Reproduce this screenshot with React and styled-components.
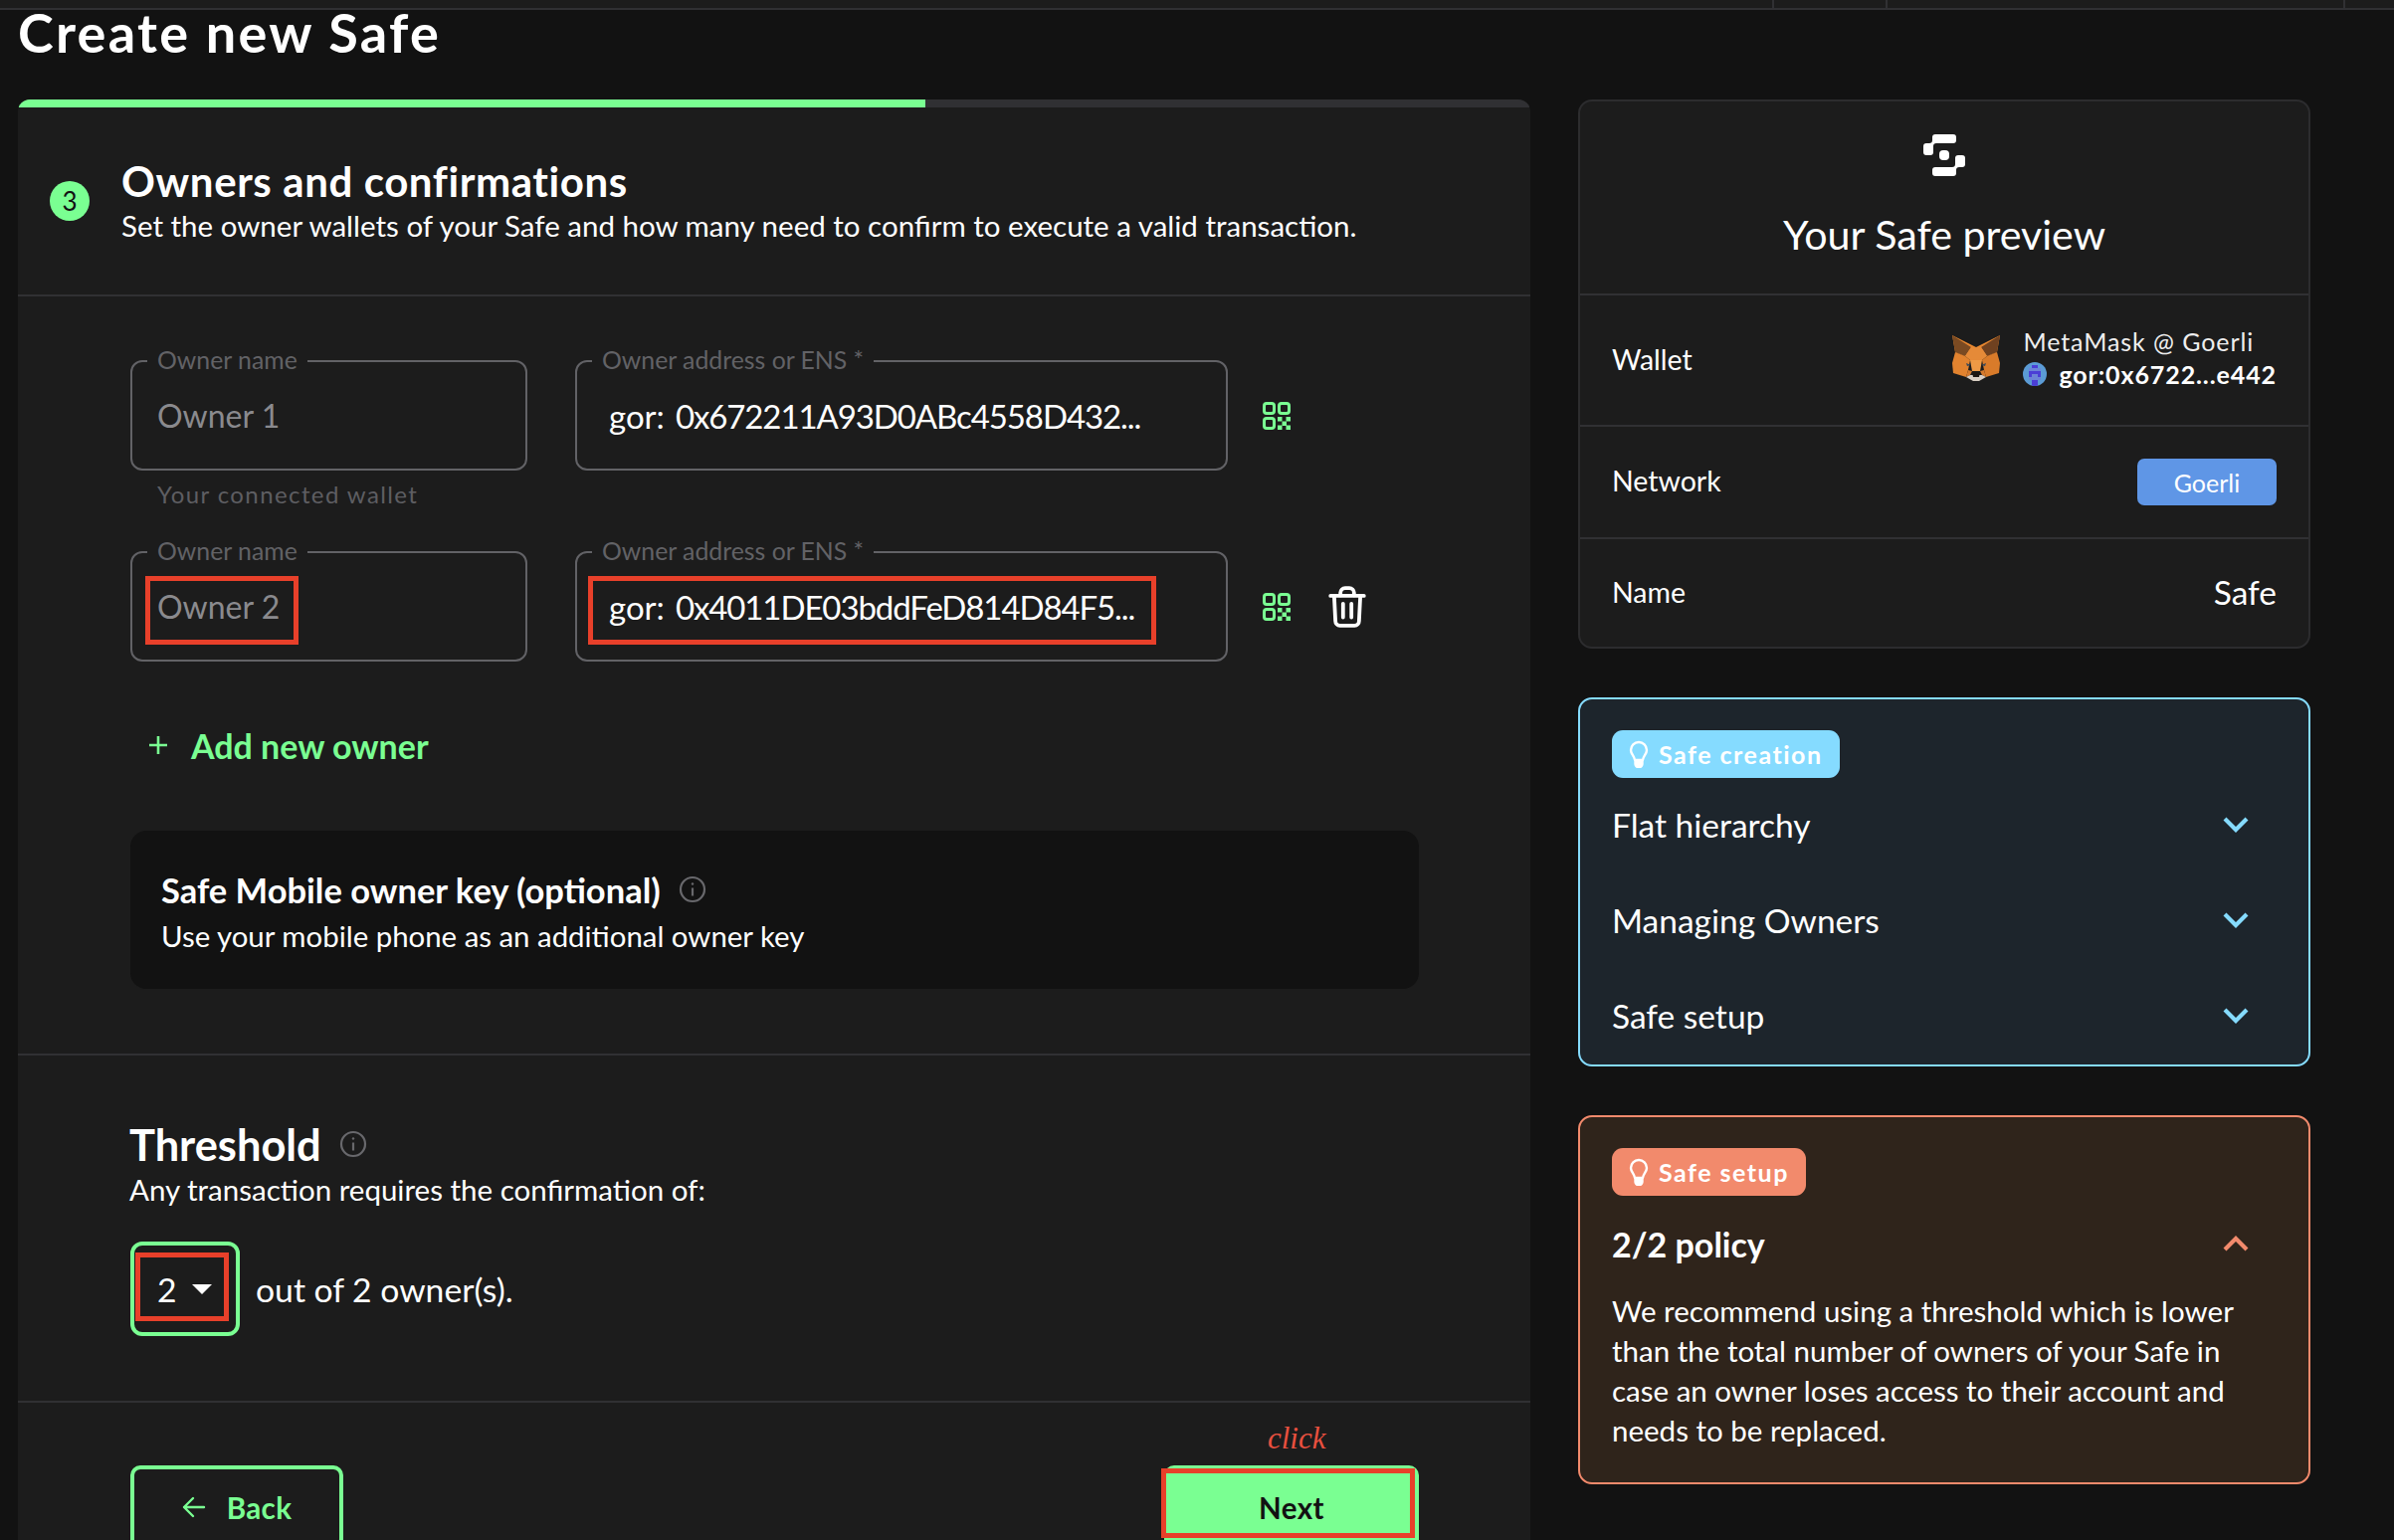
import React from 'react';
import styled, { createGlobalStyle } from 'styled-components';

const GREEN = '#7aff92';
const RED = '#e8402a';
const LINE = '#303033';

const GlobalStyle = createGlobalStyle`
  html, body {
    margin: 0;
    height: 1548px;
    overflow: hidden;
    background: #121212;
    color: #fff;
    font-family: Lato, "Noto Sans", sans-serif;
  }
  * { box-sizing: border-box; }
`;

const TopBar = styled.div`
  display: grid;
  grid-template-columns: 1783px 114px 460px 1fr;
  height: 10px;
  background: #1c1c1c;
  border-bottom: 2px solid ${LINE};
`;

const TopCell = styled.div`
  border-right: 2px solid ${LINE};
  &:last-child { border-right: 0; }
`;

const Page = styled.div`
  padding: 0 18px;
`;

const PageTitle = styled.h1`
  margin: 0 0 42px;
  height: 48px;
  font-size: 54px;
  line-height: 46px;
  font-weight: 700;
  letter-spacing: 2.3px;
`;

const Columns = styled.div`
  display: grid;
  grid-template-columns: 1520px 736px;
  gap: 48px;
  align-items: start;
`;

const MainCard = styled.section`
  background: #1c1c1c;
  border-radius: 12px 12px 0 0;
  overflow: hidden;
`;

const Progress = styled.div`
  height: 8px;
  background: ${LINE};
`;

const ProgressFill = styled.div`
  height: 100%;
  background: ${GREEN};
`;

const StepHeader = styled.header`
  display: flex;
  align-items: center;
  gap: 32px;
  height: 188px;
  padding-left: 32px;
`;

const StepCircle = styled.div`
  flex: none;
  display: flex;
  align-items: center;
  justify-content: center;
  width: 40px;
  height: 40px;
  border-radius: 50%;
  background: ${GREEN};
  color: #121212;
  font-size: 26px;
`;

const StepTitle = styled.h2`
  margin: -2px 0 2px;
  font-size: 42px;
  line-height: 50px;
  font-weight: 700;
  letter-spacing: 0.6px;
`;

const StepText = styled.p`
  margin: 0;
  font-size: 29.5px;
  line-height: 36px;
`;

const Section = styled.div`
  border-top: 2px solid ${LINE};
  padding: ${p => p.$top}px 112px 65px 113px;
`;

const FieldRow = styled.div`
  display: flex;
  align-items: center;
`;

const Field = styled.div`
  position: relative;
  flex: none;
  display: flex;
  align-items: center;
  width: ${p => p.$width}px;
  height: 111px;
  margin-right: ${p => p.$gap}px;
  padding-left: ${p => p.$inset}px;
  border: 2px solid #626266;
  border-radius: 12px;
  font-size: ${p => (p.$muted ? 32 : 33)}px;
  color: ${p => (p.$muted ? '#8a8a8e' : '#fff')};
`;

const FieldLabel = styled.label`
  position: absolute;
  top: -15px;
  left: 15px;
  padding: 0 10px;
  background: #1c1c1c;
  font-size: 24.8px;
  line-height: 26px;
  color: #626266;
  white-space: nowrap;
`;

const AddressHex = styled.span`
  margin-left: 11px;
  letter-spacing: -1.1px;
`;

const Helper = styled.div`
  height: 81px;
  padding: 11px 0 0 27px;
  font-size: 24px;
  line-height: 26px;
  letter-spacing: 1.4px;
  color: #5e5e62;
`;

const QrButton = styled.svg`
  flex: none;
  width: 28px;
  height: 28px;
  color: ${GREEN};
`;

const TrashButton = styled.svg`
  flex: none;
  width: 38px;
  height: 42px;
  margin-left: 38px;
  color: #fff;
`;

const Mark = styled.div`
  position: absolute;
  left: ${p => p.$left}px;
  top: ${p => p.$top}px;
  width: ${p => p.$w}px;
  height: ${p => p.$h}px;
  border: 5px solid ${RED};
  pointer-events: none;
`;

const AddOwner = styled.div`
  display: flex;
  align-items: center;
  gap: 23px;
  height: 40px;
  margin: 64px 0 66px 18px;
  color: ${GREEN};
  font-size: 34px;
  font-weight: 700;
`;

const MobileBox = styled.div`
  width: 1295px;
  height: 159px;
  padding: 36px 31px 0;
  background: #121212;
  border-radius: 16px;
`;

const MobileTitle = styled.div`
  display: flex;
  align-items: center;
  gap: 18px;
  height: 46px;
  font-size: 34.5px;
  font-weight: 700;
`;

const MobileText = styled.div`
  margin-top: 4px;
  font-size: 29.4px;
  line-height: 40px;
`;

const InfoIcon = styled.svg`
  flex: none;
  width: 28px;
  height: 28px;
  color: #68686c;
`;

const ThresholdTitle = styled.div`
  display: flex;
  align-items: center;
  gap: 18px;
  height: 50px;
  margin-left: -1px;
  font-size: 43.4px;
  font-weight: 700;
`;

const ThresholdText = styled.div`
  margin: 3px 0 34px -1px;
  font-size: 29.5px;
  line-height: 36px;
`;

const ThresholdRow = styled.div`
  display: flex;
  align-items: center;
  gap: 16px;
  font-size: 33.7px;
`;

const Select = styled.div`
  position: relative;
  display: flex;
  align-items: center;
  gap: 15px;
  width: 110px;
  height: 95px;
  padding-left: 23px;
  border: 4px solid ${GREEN};
  border-radius: 12px;
`;

const Caret = styled.span`
  width: 0;
  height: 0;
  border-left: 10px solid transparent;
  border-right: 10px solid transparent;
  border-top: 10px solid #fff;
`;

const Footer = styled.div`
  display: flex;
  justify-content: space-between;
  height: 141px;
  padding: 63px 112px 0 113px;
  border-top: 2px solid ${LINE};
`;

const Button = styled.div`
  position: relative;
  display: flex;
  align-items: center;
  justify-content: center;
  gap: 21px;
  width: ${p => p.$width}px;
  height: 84px;
  border: 4px solid ${GREEN};
  border-radius: 10px;
  background: ${p => (p.$filled ? GREEN : 'transparent')};
  color: ${p => (p.$filled ? '#121212' : GREEN)};
  font-size: 29.5px;
  font-weight: 700;
  letter-spacing: 0.4px;
`;

const ClickNote = styled.span`
  position: absolute;
  left: 100px;
  top: -51px;
  font-family: "Liberation Serif", serif;
  font-style: italic;
  font-size: 31px;
  font-weight: 400;
  line-height: 40px;
  letter-spacing: 0;
  color: #e8503f;
`;

const Side = styled.aside`
  display: flex;
  flex-direction: column;
  gap: 49px;
`;

const PreviewCard = styled.div`
  border: 2px solid #2c2c2e;
  border-radius: 14px;
  background: #1c1c1c;
  overflow: hidden;
`;

const PreviewHead = styled.div`
  display: flex;
  flex-direction: column;
  align-items: center;
  height: 193px;
  padding-top: 33px;
  font-size: 41.2px;
  line-height: 50px;
`;

const SafeLogo = styled.svg`
  width: 42px;
  height: 42px;
  margin-bottom: 33px;
`;

const PreviewRow = styled.div`
  display: flex;
  align-items: center;
  justify-content: space-between;
  height: ${p => p.$h}px;
  padding: 0 32px;
  border-top: 2px solid ${LINE};
`;

const RowLabel = styled.span`
  margin-bottom: 3px;
  font-size: 28.5px;
`;

const RowValue = styled.span`
  margin-bottom: 3px;
  font-size: 33.5px;
`;

const Wallet = styled.div`
  display: flex;
  align-items: center;
  gap: 23px;
  margin-bottom: 4px;
`;

const Fox = styled.svg`
  width: 48px;
  height: 46px;
`;

const WalletLines = styled.div`
  display: flex;
  flex-direction: column;
  gap: 3px;
  margin-bottom: 2px;
`;

const WalletName = styled.div`
  font-size: 25px;
  line-height: 30px;
  letter-spacing: 0.93px;
  color: #eee;
`;

const WalletAddress = styled.div`
  display: flex;
  align-items: center;
  gap: 12px;
  font-size: 25px;
  line-height: 30px;
  font-weight: 700;
  letter-spacing: 0.9px;
`;

const Identicon = styled.svg`
  width: 24px;
  height: 24px;
  border-radius: 50%;
`;

const NetworkChip = styled.div`
  display: flex;
  align-items: center;
  justify-content: center;
  width: 140px;
  height: 47px;
  border-radius: 7px;
  background: #5f96e6;
  font-size: 25px;
`;

const TipCard = styled.div`
  height: ${p => p.$h}px;
  padding: 31px 32px 0;
  border: 2px solid ${p => p.$accent};
  border-radius: 14px;
  background: ${p => p.$bg};
`;

const TipBadge = styled.div`
  display: inline-flex;
  align-items: center;
  gap: 10px;
  height: 48px;
  padding: 0 17px;
  border-radius: 11px;
  background: ${p => p.$accent};
  font-size: 25px;
  font-weight: 700;
  letter-spacing: 1.5px;
`;

const TipRow = styled.div`
  display: flex;
  align-items: center;
  justify-content: space-between;
  height: 96px;
  padding-right: 28px;
  font-size: ${p => (p.$bold ? 34 : 33.5)}px;
  font-weight: ${p => (p.$bold ? 700 : 400)};
`;

const TipList = styled.div`
  margin-top: -1px;
`;

const Chevron = styled.svg`
  flex: none;
  width: 26px;
  height: 16px;
  color: ${p => p.$accent};
  transform: ${p => (p.$up ? 'rotate(180deg)' : 'none')};
`;

const TipText = styled.p`
  margin: 0;
  font-size: 29.5px;
  line-height: 40px;
`;

const QrIcon = () => (
  <QrButton viewBox="0 0 28 28" fill="none" stroke="currentColor" strokeWidth="3">
    <rect x="1.5" y="1.5" width="10" height="10" rx="2.5" />
    <rect x="16.5" y="1.5" width="10" height="10" rx="2.5" />
    <rect x="1.5" y="16.5" width="10" height="10" rx="2.5" />
    <g fill="currentColor" stroke="none">
      <rect x="15" y="15" width="4.5" height="4.5" />
      <rect x="23.5" y="15" width="4.5" height="4.5" />
      <rect x="19.5" y="19.5" width="4.5" height="4.5" />
      <rect x="15" y="23.5" width="4.5" height="4.5" />
      <rect x="23.5" y="23.5" width="4.5" height="4.5" />
    </g>
  </QrButton>
);

const TrashIcon = () => (
  <TrashButton viewBox="0 0 36 40" fill="none" stroke="currentColor" strokeWidth="3.6" strokeLinecap="round" strokeLinejoin="round">
    <path d="M2 9.5h32" />
    <path d="M11.5 9V6.5a4.5 4.5 0 014.5-4.5h4a4.5 4.5 0 014.5 4.5V9" />
    <path d="M5.5 10l1.2 23.5A4.5 4.5 0 0011 38h14a4.5 4.5 0 004.3-4.5L30.5 10" />
    <path d="M14 17v13M22 17v13" />
  </TrashButton>
);

const Info = () => (
  <InfoIcon viewBox="0 0 28 28" fill="none" stroke="currentColor" strokeWidth="2.2">
    <circle cx="14" cy="14" r="12" />
    <path d="M14 12.5v8" />
    <circle cx="14" cy="8.5" r="1.2" fill="currentColor" stroke="none" />
  </InfoIcon>
);

const PlusIcon = () => (
  <svg width="20" height="20" viewBox="0 0 20 20" stroke="currentColor" strokeWidth="2.6" fill="none">
    <path d="M10 1v18M1 10h18" />
  </svg>
);

const ArrowIcon = () => (
  <svg width="24" height="22" viewBox="0 0 24 22" stroke="currentColor" strokeWidth="2.4" fill="none" strokeLinecap="round" strokeLinejoin="round">
    <path d="M22 11H2M11 2l-9 9 9 9" />
  </svg>
);

const BulbIcon = () => (
  <svg width="20" height="28" viewBox="0 0 20 28" fill="none" stroke="#fff" strokeWidth="2.4" strokeLinejoin="round">
    <path d="M10 2a8 8 0 00-8 8c0 4 3.6 6 4 10h8c.4-4 4-6 4-10a8 8 0 00-8-8z" />
    <path d="M6.5 21h7v3a3 3 0 01-3 3h-1a3 3 0 01-3-3z" fill="#fff" />
  </svg>
);

const ChevronIcon = ({ accent, up }) => (
  <Chevron $accent={accent} $up={up} viewBox="0 0 26 16" fill="none" stroke="currentColor" strokeWidth="4.2">
    <path d="M2 2l11 11L24 2" />
  </Chevron>
);

const SAFE_PIECE = 'M12 0h18a3 3 0 013 3v3a3 3 0 01-3 3H13a3 3 0 00-3 3v6a3 3 0 01-3 3H3a3 3 0 01-3-3v-6a3 3 0 013-3h3a3 3 0 003-3V3a3 3 0 013-3z';

const SafeMark = () => (
  <SafeLogo viewBox="0 0 42 42" fill="#fff">
    <path d={SAFE_PIECE} />
    <path d={SAFE_PIECE} transform="rotate(180 21 21)" />
    <rect x="16" y="16" width="10" height="10" rx="4" />
  </SafeLogo>
);

const FOX_PARTS = [
  ['#e8872f', '0,0 24,12 48,0 45,17 35,21 13,21 3,17'],
  ['#7a4a22', '0,0 19,12 13,21 3,17'],
  ['#6f4120', '48,0 29,12 35,21 45,17'],
  ['#e58a38', '19,12 29,12 35,21 30,25 18,25 13,21'],
  ['#e2832f', '3,17 13,21 18,25 16,35 14,42 1,38 0,28'],
  ['#d97b2a', '45,17 35,21 30,25 32,35 34,42 47,38 48,28'],
  ['#ee9a45', '18,25 30,25 28,36 20,36'],
  ['#d67a2c', '16,35 20,36 18,40 14,42'],
  ['#d67a2c', '32,35 28,36 30,40 34,42'],
  ['#d9cfc4', '14,42 18,40 30,40 34,42 27,46 21,46'],
  ['#1c1612', '20,37 28,37 27,42 21,42'],
  ['#3a4a5a', '14,28 19,30 15,31'],
  ['#3a4a5a', '34,28 29,30 33,31'],
];

const FoxLogo = () => (
  <Fox viewBox="0 0 48 46">
    {FOX_PARTS.map(([fill, points]) => <polygon key={points} fill={fill} points={points} />)}
  </Fox>
);

const IDENTICON_CELLS = [[3, 1], [4, 1], [2, 3], [5, 3], [3, 3], [4, 3], [2, 4], [5, 4], [3, 6], [4, 6], [3, 7], [4, 7]];

const AccountIcon = () => (
  <Identicon viewBox="0 0 8 8" shapeRendering="crispEdges">
    <rect width="8" height="8" fill="#5b9bd5" />
    <rect x="2" y="2" width="4" height="4" fill="#6d84d8" />
    {IDENTICON_CELLS.map(([x, y]) => <rect key={`${x}-${y}`} x={x} y={y} width="1" height="1" fill="#4b3fd6" />)}
  </Identicon>
);

const CREATION_TIPS = ['Flat hierarchy', 'Managing Owners', 'Safe setup'];
const BLUE = '#85dbff';
const ORANGE = '#f28a6c';

export default function App() {
  return (
    <>
      <GlobalStyle />
      <TopBar>
        <TopCell />
        <TopCell />
        <TopCell />
        <TopCell />
      </TopBar>
      <Page>
        <PageTitle>Create new Safe</PageTitle>
        <Columns>
          <MainCard>
            <Progress>
              <ProgressFill style={{ width: `${(3 / 5) * 100}%` }} />
            </Progress>
            <StepHeader>
              <StepCircle>3</StepCircle>
              <div>
                <StepTitle>Owners and confirmations</StepTitle>
                <StepText>Set the owner wallets of your Safe and how many need to confirm to execute a valid transaction.</StepText>
              </div>
            </StepHeader>

            <Section $top={64}>
              <FieldRow>
                <Field $width={399} $gap={48} $inset={25} $muted>
                  <FieldLabel>Owner name</FieldLabel>
                  Owner 1
                </Field>
                <Field $width={656} $gap={35} $inset={32}>
                  <FieldLabel>Owner address or ENS *</FieldLabel>
                  gor:<AddressHex>0x672211A93D0ABc4558D432...</AddressHex>
                </Field>
                <QrIcon />
              </FieldRow>
              <Helper>Your connected wallet</Helper>
              <FieldRow>
                <Field $width={399} $gap={48} $inset={25} $muted>
                  <FieldLabel>Owner name</FieldLabel>
                  Owner 2
                  <Mark $left={13} $top={23} $w={154} $h={69} />
                </Field>
                <Field $width={656} $gap={35} $inset={32}>
                  <FieldLabel>Owner address or ENS *</FieldLabel>
                  gor:<AddressHex>0x4011DE03bddFeD814D84F5...</AddressHex>
                  <Mark $left={11} $top={23} $w={571} $h={69} />
                </Field>
                <QrIcon />
                <TrashIcon />
              </FieldRow>
              <AddOwner><PlusIcon />Add new owner</AddOwner>
              <MobileBox>
                <MobileTitle>Safe Mobile owner key (optional)<Info /></MobileTitle>
                <MobileText>Use your mobile phone as an additional owner key</MobileText>
              </MobileBox>
            </Section>

            <Section $top={64}>
              <ThresholdTitle>Threshold<Info /></ThresholdTitle>
              <ThresholdText>Any transaction requires the confirmation of:</ThresholdText>
              <ThresholdRow>
                <Select>
                  2<Caret />
                  <Mark $left={1} $top={7} $w={94} $h={69} />
                </Select>
                out of 2 owner(s).
              </ThresholdRow>
            </Section>

            <Footer>
              <Button $width={214}><ArrowIcon />Back</Button>
              <Button $width={256} $filled>
                Next
                <ClickNote>click</ClickNote>
                <Mark $left={-7} $top={-1} $w={255} $h={70} />
              </Button>
            </Footer>
          </MainCard>

          <Side>
            <PreviewCard>
              <PreviewHead>
                <SafeMark />
                Your Safe preview
              </PreviewHead>
              <PreviewRow $h={132}>
                <RowLabel>Wallet</RowLabel>
                <Wallet>
                  <FoxLogo />
                  <WalletLines>
                    <WalletName>MetaMask @ Goerli</WalletName>
                    <WalletAddress><AccountIcon />gor:0x6722...e442</WalletAddress>
                  </WalletLines>
                </Wallet>
              </PreviewRow>
              <PreviewRow $h={113}>
                <RowLabel>Network</RowLabel>
                <NetworkChip>Goerli</NetworkChip>
              </PreviewRow>
              <PreviewRow $h={110}>
                <RowLabel>Name</RowLabel>
                <RowValue>Safe</RowValue>
              </PreviewRow>
            </PreviewCard>

            <TipCard $h={371} $accent={BLUE} $bg="#1d252c">
              <TipBadge $accent={BLUE}><BulbIcon />Safe creation</TipBadge>
              <TipList>
                {CREATION_TIPS.map(tip => (
                  <TipRow key={tip}>{tip}<ChevronIcon accent={BLUE} /></TipRow>
                ))}
              </TipList>
            </TipCard>

            <TipCard $h={371} $accent={ORANGE} $bg="#2f241b">
              <TipBadge $accent={ORANGE}><BulbIcon />Safe setup</TipBadge>
              <TipRow $bold>2/2 policy<ChevronIcon accent={ORANGE} up /></TipRow>
              <TipText>
                We recommend using a threshold which is lower than the total number of owners of your Safe in case an owner loses access to their account and needs to be replaced.
              </TipText>
            </TipCard>
          </Side>
        </Columns>
      </Page>
    </>
  );
}
